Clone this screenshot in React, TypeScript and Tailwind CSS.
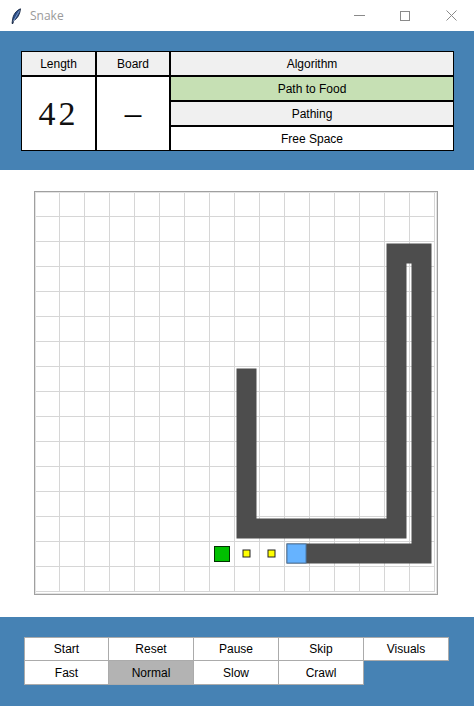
import React from "react";

const cx = (k: number) => 25 * k + 12.5;

function Board() {
  const lines: React.ReactNode[] = [];
  for (let k = 1; k <= 16; k++) {
    const p = 25 * k + 0.5;
    lines.push(<line key={"v" + k} x1={p} y1={1} x2={p} y2={401} stroke="#d6d6d6" strokeWidth={1} />);
    lines.push(<line key={"h" + k} x1={1} y1={p} x2={401} y2={p} stroke="#d6d6d6" strokeWidth={1} />);
  }
  const pts: [number, number][] = [
    [8, 7],
    [8, 13],
    [14, 13],
    [14, 2],
    [15, 2],
    [15, 14],
    [10, 14],
  ];
  const poly = pts.map(([a, b]) => `${cx(a)},${cx(b)}`).join(" ");
  return (
    <svg width={404} height={404} viewBox="0 0 404 404" className="block">
      <rect x={0} y={0} width={404} height={404} fill="#ffffff" />
      {lines}
      <rect x={0.5} y={0.5} width={403} height={403} fill="none" stroke="#a0a0a0" strokeWidth={1} />
      <rect x={1.5} y={1.5} width={401} height={401} fill="none" stroke="#e3e3e3" strokeWidth={1} />
      <polyline points={poly} fill="none" stroke="#4d4d4d" strokeWidth={20} strokeLinecap="square" strokeLinejoin="miter" />
      <rect x={253} y={353} width={19} height={19} fill="#66b3ff" stroke="#4a78a8" strokeWidth={1} />
      <rect x={180.5} y={355.5} width={15} height={15} fill="#00c000" stroke="#003300" strokeWidth={1} />
      <rect x={209} y={359} width={7} height={7} fill="#ffff00" stroke="#222222" strokeWidth={1} />
      <rect x={234} y={359} width={7} height={7} fill="#ffff00" stroke="#222222" strokeWidth={1} />
    </svg>
  );
}

function Feather() {
  return (
    <svg width={12} height={16} viewBox="0 0 12 16">
      <path d="M10.5 0.8 C6 2.5 3 7 2.5 12 L2 15.5 L3 15.5 L3.6 12.5 C7.5 11 10 6 10.5 0.8 Z" fill="#2c4f8a" stroke="#0d1a33" strokeWidth={0.8} />
      <path d="M9.5 2.5 L3.2 13.5" stroke="#9fb8e0" strokeWidth={0.7} />
    </svg>
  );
}

export default function App() {
  const font = { fontFamily: '"Liberation Sans", Arial, sans-serif' };
  const cell = "border border-black flex items-center justify-center text-[12px] text-black";
  const btn = "h-[24px] flex items-center justify-center text-[12px] text-black border-[#ababab]";
  return (
    <div className="w-[474px] h-[706px] flex flex-col bg-white overflow-hidden" style={font}>
      {/* Title bar */}
      <div className="h-[31px] flex items-center bg-white shrink-0">
        <div className="ml-[10px] mt-[1px] flex items-center">
          <Feather />
        </div>
        <span className="ml-[8px] text-[12px] text-[#9a9a9a]" style={{ fontFamily: '"Open Sans", "Liberation Sans", sans-serif' }}>
          Snake
        </span>
        <div className="ml-auto flex items-center h-full">
          <div className="w-[46px] h-full flex items-center justify-center">
            <div className="w-[11px] h-px bg-[#8a8a8a]" />
          </div>
          <div className="w-[46px] h-full flex items-center justify-center">
            <div className="w-[10px] h-[10px] border border-[#8a8a8a]" />
          </div>
          <div className="w-[46px] h-full flex items-center justify-center">
            <svg width={11} height={11} viewBox="0 0 11 11">
              <path d="M0.5 0.5 L10.5 10.5 M10.5 0.5 L0.5 10.5" stroke="#8a8a8a" strokeWidth={1} />
            </svg>
          </div>
        </div>
      </div>

      {/* Header panel */}
      <div className="h-[139px] bg-[#4682b4] pt-[20px] pl-[21px] shrink-0">
        <div className="grid grid-cols-[75px_74px_284px] grid-rows-[25px_25px_25px_25px] w-[433px]">
          <div className={`${cell} bg-[#f0f0f0]`}>Length</div>
          <div className={`${cell} bg-[#f0f0f0]`}>Board</div>
          <div className={`${cell} bg-[#f0f0f0]`}>Algorithm</div>
          <div
            className="row-span-3 border border-black bg-white flex items-center justify-center text-[34px] tracking-[3px] text-[#111111]"
            style={{ fontFamily: '"Liberation Serif", "Times New Roman", serif' }}
          >
            42
          </div>
          <div
            className="row-span-3 border border-black bg-white flex items-center justify-center text-[33px] text-black"
            style={{ fontFamily: '"Liberation Serif", "Times New Roman", serif' }}
          >
            –
          </div>
          <div className={`${cell} bg-[#c6e0b4]`}>Path to Food</div>
          <div className={`${cell} bg-[#f0f0f0]`}>Pathing</div>
          <div className={`${cell} bg-white`}>Free Space</div>
        </div>
      </div>

      {/* Board area */}
      <div className="h-[447px] bg-white pt-[21px] pl-[34px] shrink-0">
        <Board />
      </div>

      {/* Controls */}
      <div className="flex-1 bg-[#4682b4] pt-[20px] pl-[24px]">
        <div className="grid grid-cols-[85px_85px_85px_85px_85px] w-[425px]">
          <div className={`${btn} bg-white border-l border-t border-r border-b`}>Start</div>
          <div className={`${btn} bg-white border-t border-r border-b`}>Reset</div>
          <div className={`${btn} bg-white border-t border-r border-b`}>Pause</div>
          <div className={`${btn} bg-white border-t border-r border-b`}>Skip</div>
          <div className={`${btn} bg-white border-t border-r border-b`}>Visuals</div>
          <div className={`${btn} bg-white border-l border-r border-b`}>Fast</div>
          <div className={`${btn} bg-[#b3b3b3] border-r border-b`}>Normal</div>
          <div className={`${btn} bg-white border-r border-b`}>Slow</div>
          <div className={`${btn} bg-white border-r border-b`}>Crawl</div>
        </div>
      </div>
    </div>
  );
}
